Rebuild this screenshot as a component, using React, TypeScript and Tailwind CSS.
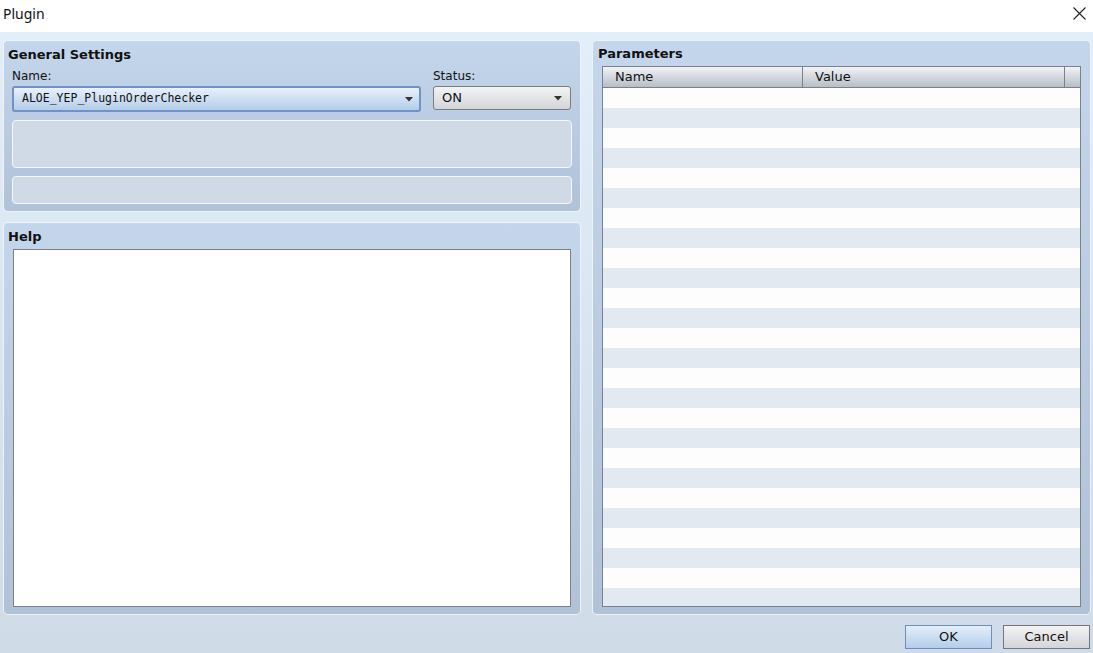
import React from 'react';

const ui = { fontFamily: '"DejaVu Sans", Verdana, sans-serif' };
const mono = { fontFamily: '"DejaVu Sans Mono", "Liberation Mono", monospace' };

const Caret: React.FC = () => (
  <svg width="8" height="5" viewBox="0 0 8 5" className="flex-shrink-0">
    <polygon points="0,0 8,0 4,4.5" fill="#333" />
  </svg>
);

const Panel: React.FC<{ title: string; className?: string; titleH: string; children: React.ReactNode }> = ({
  title,
  className = '',
  titleH,
  children,
}) => (
  <div
    className={`rounded-[5px] border border-[#eef3f9] bg-gradient-to-b from-[#c4d6eb] to-[#afc2d8] flex flex-col ${className}`}
  >
    <div className={`${titleH} flex items-center pl-[4px] text-[13px] font-bold text-[#111]`} style={ui}>
      {title}
    </div>
    {children}
  </div>
);

const App: React.FC = () => {
  const rows = Array.from({ length: 26 }, (_, i) => i);
  return (
    <div className="w-[1093px] h-[653px] flex flex-col overflow-hidden bg-white">
      {/* Title bar */}
      <div className="h-[32px] flex items-start justify-between pl-[3px] pr-[7px] pt-[4px] bg-white">
        <span className="text-[14px] leading-[20px] text-[#111]" style={{ fontFamily: '"Noto Sans", "Open Sans", sans-serif' }}>
          Plugin
        </span>
        <svg width="13" height="13" viewBox="0 0 13 13" className="mt-[3px]">
          <path d="M0.5 0.5 L12.5 12.5 M12.5 0.5 L0.5 12.5" stroke="#222" strokeWidth="1.1" />
        </svg>
      </div>

      {/* Body */}
      <div className="flex-1 flex flex-col bg-gradient-to-b from-[#e3eefb] to-[#cfdbe7] pt-[8px] pl-[3px] pr-[2px]">
        <div className="flex gap-[11px] h-[575px]">
          {/* Left column */}
          <div className="w-[578px] flex flex-col gap-[10px]">
            <Panel title="General Settings" titleH="h-[25px] pt-[2px]" className="h-[172px]">
              <div className="flex gap-[12px] pl-[8px] pr-[8px]">
                <div className="w-[409px] flex flex-col">
                  <div className="h-[20px] flex items-center text-[12px] text-[#111]" style={ui}>
                    Name:
                  </div>
                  <div className="h-[26px] rounded-[3px] border-2 border-[#6f93c2] bg-gradient-to-b from-[#e8f1fb] to-[#b3cde9] flex items-center justify-between pl-[8px] pr-[6px]">
                    <span className="text-[11.5px] text-[#111]" style={mono}>
                      ALOE_YEP_PluginOrderChecker
                    </span>
                    <Caret />
                  </div>
                </div>
                <div className="w-[139px] flex flex-col">
                  <div className="h-[20px] flex items-center text-[12px] text-[#111]" style={ui}>
                    Status:
                  </div>
                  <div className="w-[138px] h-[24px] rounded-[3px] border border-[#7c7c7c] bg-gradient-to-b from-[#f3f3f3] to-[#d2d5d9] flex items-center justify-between pl-[8px] pr-[8px]">
                    <span className="text-[13px] text-[#111]" style={ui}>
                      ON
                    </span>
                    <Caret />
                  </div>
                </div>
              </div>
              <div className="mx-[8px] mt-[8px] h-[48px] rounded-[4px] border border-[#f4f7fb] bg-[#cfdae6]" />
              <div className="mx-[8px] mt-[8px] h-[28px] rounded-[4px] border border-[#f4f7fb] bg-[#cfdae6]" />
            </Panel>

            <Panel title="Help" titleH="h-[26px] pt-[1px]" className="flex-1">
              <div className="ml-[9px] mr-[9px] mb-[7px] flex-1 bg-white border border-[#7c8088]" />
            </Panel>
          </div>

          {/* Right column */}
          <Panel title="Parameters" titleH="h-[25px] pt-[1px] pl-[5px]" className="w-[499px]">
            <div className="mx-[9px] mb-[7px] flex-1 border border-[#7c8088] flex flex-col overflow-hidden">
              <div className="h-[21px] flex-shrink-0 flex bg-gradient-to-b from-[#f1f3f6] to-[#b7bec7] border-b border-[#7c8088] text-[13px] text-[#111]" style={ui}>
                <div className="w-[200px] border-r border-[#7c8088] pl-[12px] flex items-center">Name</div>
                <div className="w-[262px] border-r border-[#7c8088] pl-[12px] flex items-center">Value</div>
                <div className="flex-1" />
              </div>
              {rows.map((i) => (
                <div key={i} className={`h-[20px] flex-shrink-0 ${i % 2 === 0 ? 'bg-[#fdfdfd]' : 'bg-[#e3e9f0]'}`} />
              ))}
            </div>
          </Panel>
        </div>

        {/* Buttons */}
        <div className="flex justify-end gap-[11px] mt-[10px] pr-[1px]">
          <button
            type="button"
            className="w-[87px] h-[24px] border border-[#6f8fba] bg-gradient-to-b from-[#e4effa] to-[#b3cdea] text-[13px] text-[#111]"
            style={ui}
          >
            OK
          </button>
          <button
            type="button"
            className="w-[87px] h-[24px] border border-[#767676] bg-gradient-to-b from-[#f3f3f3] to-[#d3d5d8] text-[13px] text-[#111]"
            style={ui}
          >
            Cancel
          </button>
        </div>
      </div>
    </div>
  );
};

export default App;
